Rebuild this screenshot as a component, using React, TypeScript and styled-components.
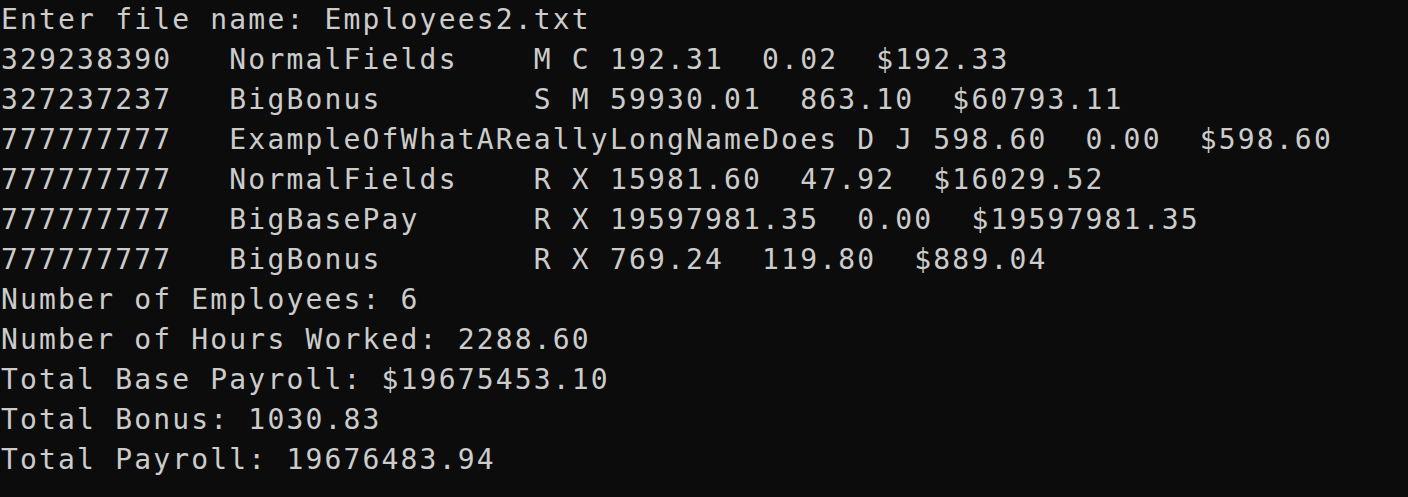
import React from "react";
import styled, { createGlobalStyle } from "styled-components";

const Global = createGlobalStyle`
  html, body { margin: 0; padding: 0; background: #0c0c0c; }
  body { width: 1408px; height: 497px; overflow: hidden; }
`;

const Terminal = styled.div`
  width: 1408px;
  height: 497px;
  background: #0c0c0c;
  color: #cccccc;
  padding: 0 0 0 1px;
  box-sizing: border-box;
  font-family: "DejaVu Sans Mono", "Liberation Mono", monospace;
  font-size: 28px;
  letter-spacing: 2.17px;
  line-height: 40px;
`;

const Line = styled.div`
  white-space: pre;
  height: 40px;
`;

const lines = [
  "Enter file name: Employees2.txt",
  "329238390   NormalFields    M C 192.31  0.02  $192.33",
  "327237237   BigBonus        S M 59930.01  863.10  $60793.11",
  "777777777   ExampleOfWhatAReallyLongNameDoes D J 598.60  0.00  $598.60",
  "777777777   NormalFields    R X 15981.60  47.92  $16029.52",
  "777777777   BigBasePay      R X 19597981.35  0.00  $19597981.35",
  "777777777   BigBonus        R X 769.24  119.80  $889.04",
  "Number of Employees: 6",
  "Number of Hours Worked: 2288.60",
  "Total Base Payroll: $19675453.10",
  "Total Bonus: 1030.83",
  "Total Payroll: 19676483.94",
];

export default function App() {
  return (
    <>
      <Global />
      <Terminal>
        {lines.map((l, i) => (
          <Line key={i}>{l}</Line>
        ))}
      </Terminal>
    </>
  );
}
